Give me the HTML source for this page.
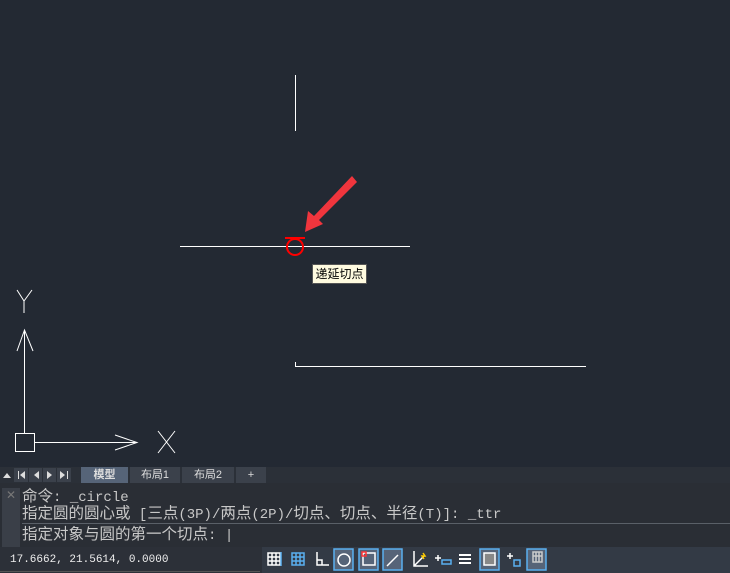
<!DOCTYPE html>
<html><head><meta charset="utf-8"><style>
body{margin:0;width:730px;height:573px;background:#232933;position:relative;overflow:hidden;font-family:"Liberation Sans","Noto Sans CJK SC",sans-serif}
.abs{position:absolute}
.tab{position:absolute;top:467px;height:16px;font-size:11px;color:#ddd;text-align:center;line-height:16px;background:#3b414b}
.cmd{position:absolute;left:22px;font-family:"Liberation Mono","Noto Sans CJK SC",monospace;font-size:14px;color:#c8c8c8;line-height:16px;white-space:pre}
.cmd b{font-weight:normal;font-size:15.5px}
</style></head><body>
<svg class="abs" style="left:0;top:0" width="730" height="467">
<g stroke="#fff" stroke-width="1" fill="none" shape-rendering="crispEdges">
<line x1="295.5" y1="75" x2="295.5" y2="131"/>
<line x1="180" y1="246.5" x2="410" y2="246.5"/>
<line x1="295.5" y1="362" x2="295.5" y2="367"/>
<line x1="295" y1="366.5" x2="586" y2="366.5"/>
<line x1="24.5" y1="330" x2="24.5" y2="433"/>
<rect x="15.5" y="433.5" width="19" height="18"/>
<line x1="35" y1="442.5" x2="137" y2="442.5"/>
</g>
<g stroke="#fff" stroke-width="1" fill="none">
<path d="M17 351 L24.5 330 L33 351"/>
<path d="M115 435 L137 442.5 L115 450"/>
<path d="M17 290 L24 301 L32 290 M24 301 V313"/>
<path d="M158 431 L175 453 M175 431 L158 453"/>
</g>
<path d="M305 232 L308 211 L314 216 L352 176 L357 182 L319 220 L323 224 Z" fill="#f0353d"/>
<circle cx="295" cy="247" r="8" stroke="#f00" stroke-width="2" fill="none"/>
<line x1="285" y1="238" x2="305" y2="238" stroke="#f00" stroke-width="2"/>
</svg>
<div class="abs" style="left:312px;top:264px;width:53px;height:18px;background:#fffbe0;border:1px solid #555;font-size:12px;line-height:18px;text-align:center;color:#000">递延切点</div>
<div class="abs" style="left:0;top:467px;width:730px;height:16px;background:#2b3038"></div>
<svg class="abs" style="left:0;top:467px" width="80" height="16" fill="#ddd">
<path d="M3 11l4-5 4 5z"/>
<rect x="14" y="1" width="14" height="14" fill="#3b414b"/><rect x="29" y="1" width="13" height="14" fill="#3b414b"/><rect x="43" y="1" width="13" height="14" fill="#3b414b"/><rect x="57" y="1" width="14" height="14" fill="#3b414b"/>
<path d="M18 4h1v8h-1zM25 4v8l-5-4z"/><path d="M39 4v8l-5-4z"/><path d="M47 4v8l5-4z"/><path d="M60 4v8l5-4zM67 4h1v8h-1z"/>
</svg>
<div class="tab" style="left:81px;width:47px;background:#566478;font-weight:bold">模型</div>
<div class="tab" style="left:130px;width:50px">布局1</div>
<div class="tab" style="left:182px;width:52px">布局2</div>
<div class="tab" style="left:236px;width:30px">+</div>
<div class="abs" style="left:0;top:483px;width:730px;height:64px;background:#2a2e35"></div>
<div class="abs" style="left:2px;top:488px;width:18px;height:59px;background:#3a3f48;color:#777;font-size:12px;text-align:center;line-height:14px">✕</div>
<div class="cmd" style="top:489px"><b>命令</b>: _circle</div>
<div class="cmd" style="top:506px"><b>指定圆的圆心或</b> [<b>三点</b>(3P)/<b>两点</b>(2P)/<b>切点、切点、半径</b>(T)]: _ttr</div>
<div class="abs" style="left:22px;top:523px;width:708px;height:1px;background:#5a6068"></div>
<div class="cmd" style="top:527px"><b>指定对象与圆的第一个切点</b>: |</div>
<div class="abs" style="left:0;top:547px;width:730px;height:26px;background:#2c3038"></div>
<div class="abs" style="left:262px;top:547px;width:468px;height:26px;background:#333a45"></div>
<div class="abs" style="left:0;top:571px;width:260px;height:1px;background:#555"></div>
<div class="abs" style="left:10px;top:554px;font-family:'Liberation Mono',monospace;font-size:11px;color:#eee">17.6662, 21.5614, 0.0000</div>
<svg class="abs" style="left:262px;top:547px" width="290" height="26" fill="none" stroke="#fff" stroke-width="1.5">
<path d="M6 6h12v12H6zM10 6v12M14 6v12M6 10h12M6 14h12" /><path d="M19 5v14" stroke="#5ab0f0"/>
<path d="M30 6h12v12H30zM34 6v12M38 6v12M30 10h12M30 14h12" stroke="#5ab0f0"/>
<path d="M55 5v13h12M55 13h5v5" />
<rect x="72" y="2" width="19" height="21" fill="#566478" stroke="#5ab0f0"/><circle cx="82" cy="13" r="6"/>
<rect x="97" y="2" width="19" height="21" fill="#566478" stroke="#5ab0f0"/><rect x="101" y="6" width="12" height="12"/><rect x="100" y="5" width="4" height="4" stroke="#f33"/>
<rect x="121" y="2" width="19" height="21" fill="#566478" stroke="#5ab0f0"/><path d="M125 19L136 8"/>
<path d="M152 4v15h14M152 19l10-10" /><path d="M161 6l2 3h-3l2 3" stroke="#fc0"/>
<path d="M176 8v6M173 11h6"/><rect x="180" y="13" width="9" height="4" stroke="#5ab0f0"/>
<path d="M197 8h12M197 12h12M197 16h12" stroke-width="2"/>
<rect x="218" y="2" width="19" height="21" fill="#566478" stroke="#5ab0f0"/><rect x="222" y="6" width="11" height="12" fill="#888" stroke="#fff"/>
<path d="M248 6v6M245 9h6"/><rect x="252" y="13" width="6" height="6" stroke="#5ab0f0"/>
<rect x="265" y="2" width="19" height="21" fill="#566478" stroke="#5ab0f0"/><path d="M271 5h9v10h-9zM274 5v10M277 5v10M271 9h9" stroke="#ccc"/>
</svg>
</body></html>
